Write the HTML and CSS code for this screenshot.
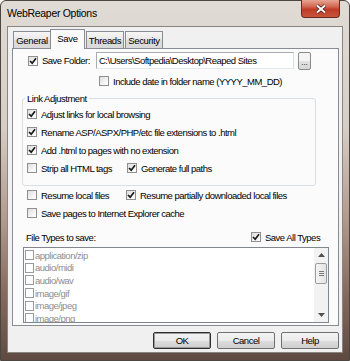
FILE: index.html
```html
<!DOCTYPE html>
<html lang="en">
<head>
    <meta charset="UTF-8">
    <title>WebReaper Options</title>
    <link rel="stylesheet" href="styles.css">
</head>
<body>
<div class="window">
    <div class="titlebar">
        <span class="title">WebReaper Options</span>
        <span class="close">
            <svg width="12" height="10" viewBox="0 0 12 10">
                <path d="M2 1.5 L10 8.5 M10 1.5 L2 8.5" stroke="#4a1c14" stroke-width="3.6" fill="none"/>
                <path d="M2 1.5 L10 8.5 M10 1.5 L2 8.5" stroke="#fff" stroke-width="2" fill="none"/>
            </svg>
        </span>
    </div>
    <div class="client">
        <div class="tabs">
            <span class="tab t-general">General</span>
            <span class="tab t-save active">Save</span>
            <span class="tab t-threads">Threads</span>
            <span class="tab t-security">Security</span>
        </div>
        <div class="panel">
            <div class="folder-row">
                <span class="check folder-label"><span class="box"><svg viewBox="0 0 8 8"><path d="M1 4 L3.2 6.2 L7 1.2" stroke="#1b1b1b" stroke-width="1.7" fill="none"/></svg></span>Save Folder:</span>
                <span class="field">C:\Users\Softpedia\Desktop\Reaped Sites</span>
                <span class="dots">...</span>
            </div>
            <div class="row date-row">
                <span class="check"><span class="box"></span>Include date in folder name (YYYY_MM_DD)</span>
            </div>
            <fieldset class="group">
                <legend>Link Adjustment</legend>
                <div class="row">
                    <span class="check"><span class="box"><svg viewBox="0 0 8 8"><path d="M1 4 L3.2 6.2 L7 1.2" stroke="#1b1b1b" stroke-width="1.7" fill="none"/></svg></span>Adjust links for local browsing</span>
                </div>
                <div class="row">
                    <span class="check"><span class="box"><svg viewBox="0 0 8 8"><path d="M1 4 L3.2 6.2 L7 1.2" stroke="#1b1b1b" stroke-width="1.7" fill="none"/></svg></span>Rename ASP/ASPX/PHP/etc file extensions to .html</span>
                </div>
                <div class="row">
                    <span class="check"><span class="box"><svg viewBox="0 0 8 8"><path d="M1 4 L3.2 6.2 L7 1.2" stroke="#1b1b1b" stroke-width="1.7" fill="none"/></svg></span>Add .html to pages with no extension</span>
                </div>
                <div class="row">
                    <span class="check first"><span class="box"></span>Strip all HTML tags</span>
                    <span class="check"><span class="box"><svg viewBox="0 0 8 8"><path d="M1 4 L3.2 6.2 L7 1.2" stroke="#1b1b1b" stroke-width="1.7" fill="none"/></svg></span>Generate full paths</span>
                </div>
            </fieldset>
            <div class="row plain">
                <span class="check first"><span class="box"></span>Resume local files</span>
                <span class="check"><span class="box"><svg viewBox="0 0 8 8"><path d="M1 4 L3.2 6.2 L7 1.2" stroke="#1b1b1b" stroke-width="1.7" fill="none"/></svg></span>Resume partially downloaded local files</span>
            </div>
            <div class="row plain">
                <span class="check"><span class="box"></span>Save pages to Internet Explorer cache</span>
            </div>
            <div class="row types-row">
                <span class="types-label">File Types to save:</span>
                <span class="check"><span class="box"><svg viewBox="0 0 8 8"><path d="M1 4 L3.2 6.2 L7 1.2" stroke="#1b1b1b" stroke-width="1.7" fill="none"/></svg></span>Save All Types</span>
            </div>
            <div class="list">
                <ul class="items">
                    <li><span class="lbox"></span>application/zip</li>
                    <li><span class="lbox"></span>audio/midi</li>
                    <li><span class="lbox"></span>audio/wav</li>
                    <li><span class="lbox"></span>image/gif</li>
                    <li><span class="lbox"></span>image/jpeg</li>
                    <li><span class="lbox"></span>image/png</li>
                </ul>
                <div class="scroll">
                    <span class="sb-btn"><svg width="7" height="4" viewBox="0 0 7 4"><path d="M0 4 L3.5 0 L7 4Z" fill="#505050"/></svg></span>
                    <span class="sb-thumb"><i></i><i></i><i></i></span>
                    <span class="sb-space"></span>
                    <span class="sb-btn"><svg width="7" height="4" viewBox="0 0 7 4"><path d="M0 0 L3.5 4 L7 0Z" fill="#505050"/></svg></span>
                </div>
            </div>
        </div>
        <div class="buttons">
            <span class="btn default">OK</span>
            <span class="btn">Cancel</span>
            <span class="btn">Help</span>
        </div>
    </div>
</div>
</body>
</html>
```

FILE: styles.css
```css
*{
    box-sizing:border-box;
}
body{
    margin:0;
    width:350px;
    height:361px;
    overflow:hidden;
    background:#fff;
    font-family:"Liberation Sans", Arial, sans-serif;
    font-size:9.5px;
    letter-spacing:-0.5px;
    color:#000;
}
.window{
    width:350px;
    height:361px;
    border:1px solid #4d4540;
    border-radius:6px 6px 0 0;
    padding:0 6px 7px 6px;
    display:flex;
    flex-direction:column;
    background:linear-gradient(#e0dbd5 0%, #d6cec6 35%, #b39b8f 60%, #86695d 82%, #5e4a42 100%);
}
.titlebar{
    height:25px;
    display:flex;
    align-items:flex-start;
    padding-right:3px;
}
.title{
    font-size:10.5px;
    letter-spacing:-0.3px;
    line-height:12px;
    padding:6px 0 0 0;
}
.close{
    margin-left:auto;
    margin-top:-1px;
    width:39px;
    height:18px;
    border:1px solid #6a2a1e;
    border-top:none;
    border-radius:0 0 4px 4px;
    background:linear-gradient(#e6a595 0%, #d2654f 40%, #bf3c25 55%, #c8543c 100%);
    display:flex;
    align-items:center;
    justify-content:center;
}
.client{
    flex:1;
    border:1px solid #8a8580;
    background:#f0f0f0;
    padding:2px 3px 3px 4px;
    display:flex;
    flex-direction:column;
}
.tabs{
    height:19px;
    display:flex;
    align-items:flex-end;
    padding-left:1px;
}
.tab{
    height:17px;
    border:1px solid #898c95;
    border-bottom:none;
    background:linear-gradient(#f6f6f6, #e8e8e8 50%, #dcdcdc 51%, #d9d9d9);
    display:flex;
    align-items:center;
    justify-content:center;
    letter-spacing:-0.35px;
}
.t-general{ width:38px; }
.t-save{ width:35px; margin-left:-1px; }
.t-threads{ width:38px; margin-left:1px; }
.t-security{ width:38px; margin-left:1px; }
.tab.active{
    height:20px;
    margin-bottom:-1px;
    background:#fbfbfb;
    position:relative;
    z-index:1;
    padding-bottom:2px;
}
.panel{
    height:278px;
    border:1px solid #898c95;
    background:#fbfbfb;
    padding:3px 0 0 0;
}
.check{
    display:flex;
    align-items:center;
    white-space:nowrap;
}
.box{
    width:10px;
    height:10px;
    border:1px solid #8e8f8f;
    background:linear-gradient(135deg, #dedede, #f8f8f8 70%, #fff);
    margin-right:4px;
    display:flex;
    align-items:center;
    justify-content:center;
    flex:none;
}
.box svg{
    width:8px;
    height:8px;
}
.folder-row{
    height:17px;
    display:flex;
    align-items:center;
    padding-left:15px;
}
.folder-label{
    width:68px;
}
.field{
    width:198px;
    height:17px;
    border:1px solid #abadb3;
    border-right-color:#dbdfe6;
    border-bottom-color:#e3e9ef;
    background:#fff;
    padding:0 2px;
    line-height:15px;
    white-space:nowrap;
    overflow:hidden;
}
.dots{
    margin-left:4px;
    width:13px;
    height:18px;
    border:1px solid #8a8a8a;
    border-radius:2px;
    background:linear-gradient(#f4f4f4 50%, #e2e2e2 51%, #d6d6d6);
    text-align:center;
    line-height:20px;
    font-size:8px;
    letter-spacing:0;
}
.row{
    height:18px;
    display:flex;
    align-items:center;
}
.date-row{
    margin-top:3px;
    padding-left:86px;
}
.group{
    margin:2px 0 0 9px;
    width:294px;
    border:1px solid #d5dfe5;
    border-radius:3px;
    padding:0 0 8px 4px;
    min-inline-size:0;
}
.group legend{
    padding:0 2px;
    margin-left:-2px;
    line-height:13px;
}
.group .first{
    width:100px;
}
.plain{
    padding-left:14px;
}
.plain .first{
    width:99px;
}
.types-row{
    margin-top:6px;
    padding-left:13px;
}
.types-label{
    width:225px;
}
.list{
    margin:1px 0 0 10px;
    width:306px;
    height:76px;
    border:1px solid #82878f;
    background:#fff;
    display:flex;
    overflow:hidden;
}
.items{
    flex:1;
    list-style:none;
    margin:0;
    padding:1px 0 0 1px;
    color:#8d8d8d;
}
.items li{
    height:12.6px;
    display:flex;
    align-items:center;
}
.lbox{
    width:9px;
    height:10px;
    border:1px solid #9a9a9a;
    background:#fff;
    margin-right:1px;
}
.scroll{
    width:14px;
    background:#f2f2f2;
    display:flex;
    flex-direction:column;
    padding:0 1px;
}
.sb-btn{
    height:14px;
    display:flex;
    align-items:center;
    justify-content:center;
}
.sb-thumb{
    margin-top:1px;
    height:21px;
    border:1px solid #9c9c9c;
    border-radius:2px;
    background:linear-gradient(90deg, #f4f4f4, #e4e4e4);
    display:flex;
    flex-direction:column;
    align-items:center;
    justify-content:center;
    gap:1px;
}
.sb-thumb i{
    width:5px;
    height:1px;
    background:#7a7a7a;
}
.sb-space{
    flex:1;
}
.buttons{
    margin-top:6px;
    height:17px;
    display:flex;
    justify-content:flex-end;
    gap:6px;
}
.btn{
    width:58px;
    height:17px;
    border:1px solid #707070;
    border-radius:2px;
    background:linear-gradient(#f3f3f3 0%, #ebebeb 50%, #dddddd 51%, #cfcfcf 100%);
    display:flex;
    align-items:center;
    justify-content:center;
}
.btn.default{
    border-color:#2f2f2f;
    box-shadow:inset 0 0 0 1px #9a9a9a;
}
```
